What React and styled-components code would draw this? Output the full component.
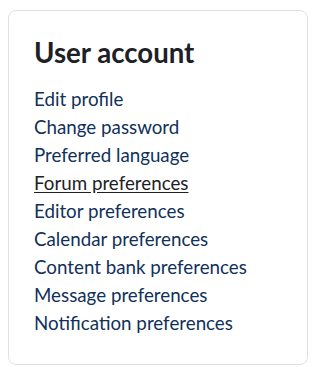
import React from 'react';
import styled, { createGlobalStyle } from 'styled-components';

const GlobalStyle = createGlobalStyle`
  body {
    margin: 0;
    padding: 10px 6px 4px 8px;
    background: #fff;
    font-family: Lato, "Noto Sans", sans-serif;
  }
`;

const Card = styled.section`
  border: 1px solid #dee2e6;
  border-radius: 8px;
  padding: 25px 25px 27px;
  box-sizing: border-box;
  width: 300px;
`;

const Title = styled.h3`
  margin: 0 0 16px;
  font-size: 27.6px;
  font-weight: 700;
  line-height: 1.2;
  color: #1d2125;
`;

const LinkList = styled.ul`
  list-style: none;
  margin: 0;
  padding: 0;
`;

const Item = styled.li`
  line-height: 28px;
  font-size: 18.75px;
`;

const Link = styled.a`
  color: ${p => (p.active ? '#1d2125' : '#11315a')};
  text-decoration: ${p => (p.active ? 'underline' : 'none')};
  text-underline-offset: 2px;
`;

const links = [
  'Edit profile',
  'Change password',
  'Preferred language',
  'Forum preferences',
  'Editor preferences',
  'Calendar preferences',
  'Content bank preferences',
  'Message preferences',
  'Notification preferences',
];

export default function App() {
  return (
    <>
      <GlobalStyle />
      <Card>
        <Title>User account</Title>
        <LinkList>
          {links.map(l => (
            <Item key={l}>
              <Link href="#" active={l === 'Forum preferences' ? 1 : 0}>{l}</Link>
            </Item>
          ))}
        </LinkList>
      </Card>
    </>
  );
}
